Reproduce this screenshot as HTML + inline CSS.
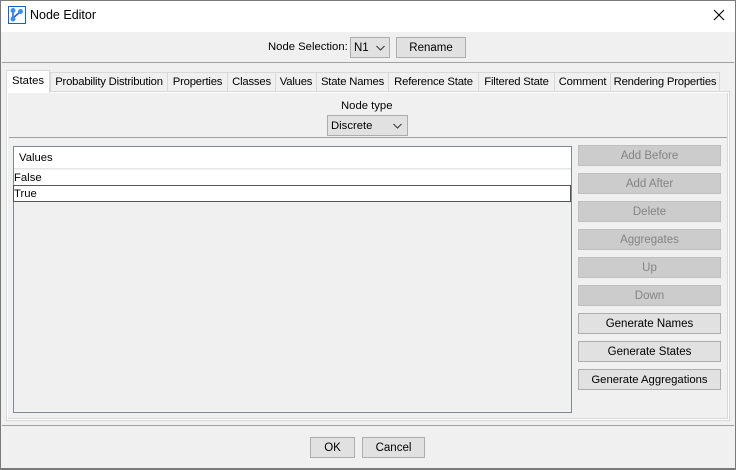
<!DOCTYPE html>
<html><head><style>
*{box-sizing:border-box;margin:0;padding:0}
body{width:736px;height:470px;background:#f0f0f0;font-family:"Liberation Sans",Tahoma,sans-serif;font-size:11.5px;color:#000;position:relative;overflow:hidden}
.a{position:absolute;white-space:nowrap}
.btn{position:absolute;background:#e1e1e1;border:1px solid #adadad;text-align:center;line-height:20px;height:21px;white-space:nowrap}
.dis{background:#cccccc;border-color:#bfbfbf;color:#838383}
.tab{position:absolute;top:72px;height:20px;border:1px solid #d9d9d9;border-bottom:none;background:#f0f0f0;text-align:center;line-height:19px;white-space:nowrap;font-size:11.3px;letter-spacing:-0.2px;overflow:hidden}
.chev{position:absolute;top:7px}
</style></head><body>
<div class="a" style="left:0;top:0;width:736px;height:32px;background:#fff"></div>
<div class="a" style="left:0;top:0;width:736px;height:470px;border:1px solid #7a7a7a;border-bottom:2px solid #7a7a7a"></div>
<svg class="a" style="left:8px;top:6px" width="18" height="18" viewBox="0 0 18 18"><rect x="0.5" y="0.5" width="17" height="17" fill="#fff" stroke="#1a5fd0"/><line x1="5" y1="4" x2="5" y2="13" stroke="#1a5fd0" stroke-width="1.5"/><line x1="5" y1="12" x2="12" y2="6" stroke="#1a5fd0" stroke-width="1.5"/><circle cx="5" cy="4.5" r="2.5" fill="#3a8ef0"/><circle cx="12.5" cy="5.5" r="2.5" fill="#3a8ef0"/><circle cx="5" cy="13" r="2.5" fill="#3a8ef0"/></svg>
<div class="a" style="left:30px;top:8px;font-size:12.5px">Node Editor</div>
<svg class="a" style="left:713px;top:9px" width="12" height="12" viewBox="0 0 12 12"><path d="M1 1L11 11M11 1L1 11" stroke="#000" stroke-width="1.1"/></svg>
<div class="a" style="left:268px;top:41px;font-size:11.3px">Node Selection:</div>
<div class="btn" style="left:350px;top:37px;width:40px;height:21px;text-align:left;padding-left:3px">N1<svg class="chev" style="left:25px" width="9" height="6" viewBox="0 0 9 6"><path d="M0.5 1L4.5 5L8.5 1" stroke="#333" fill="none"/></svg></div>
<div class="btn" style="left:396px;top:37px;width:70px">Rename</div>
<div class="a" style="left:2px;top:62px;width:732px;height:1px;background:#a0a0a0"></div>
<div class="tab" style="left:50px;width:118px">Probability Distribution</div>
<div class="tab" style="left:167px;width:61px">Properties</div>
<div class="tab" style="left:227px;width:49px">Classes</div>
<div class="tab" style="left:275px;width:42px">Values</div>
<div class="tab" style="left:316px;width:73px">State Names</div>
<div class="tab" style="left:388px;width:91px">Reference State</div>
<div class="tab" style="left:478px;width:77px">Filtered State</div>
<div class="tab" style="left:554px;width:57px">Comment</div>
<div class="tab" style="left:610px;width:110px">Rendering Properties</div>
<div class="a" style="left:6px;top:91px;width:724px;height:330px;border:1px solid #d9d9d9;background:#fff"></div>
<div class="a" style="left:8px;top:93px;width:720px;height:326px;border:1px solid #d9d9d9;border-left:none;border-top:none;background:#f0f0f0"></div>
<div class="a" style="left:6px;top:70px;width:44px;height:23px;background:#fff;border:1px solid #d9d9d9;border-bottom:none;text-align:center;line-height:21px;font-size:11.3px">States</div>
<div class="a" style="left:341px;top:100px;font-size:11.3px">Node type</div>
<div class="btn" style="left:327px;top:115px;width:81px;height:21px;text-align:left;padding-left:3px;font-size:11.3px">Discrete<svg class="chev" style="left:65px" width="9" height="6" viewBox="0 0 9 6"><path d="M0.5 1L4.5 5L8.5 1" stroke="#333" fill="none"/></svg></div>
<div class="a" style="left:9px;top:137px;width:718px;height:1px;background:#a0a0a0"></div>
<div class="a" style="left:13px;top:146px;width:559px;height:267px;border:1px solid #828790;background:#f0f0f0"></div>
<div class="a" style="left:14px;top:147px;width:557px;height:22px;background:#fff;border-bottom:1px solid #e5e5e5;padding:5px 5px;font-size:11.3px">Values</div>
<div class="a" style="left:14px;top:170px;width:557px;height:16px;background:#fff;line-height:16px;font-size:11.3px">False</div>
<div class="a" style="left:13px;top:185px;width:558px;height:17px;background:#fff;border:1px solid #555;line-height:16px;font-size:11.3px">True</div>
<div class="btn dis" style="left:578px;top:145px;width:143px">Add Before</div>
<div class="btn dis" style="left:578px;top:173px;width:143px">Add After</div>
<div class="btn dis" style="left:578px;top:201px;width:143px">Delete</div>
<div class="btn dis" style="left:578px;top:229px;width:143px">Aggregates</div>
<div class="btn dis" style="left:578px;top:257px;width:143px">Up</div>
<div class="btn dis" style="left:578px;top:285px;width:143px">Down</div>
<div class="btn" style="left:578px;top:313px;width:143px">Generate Names</div>
<div class="btn" style="left:578px;top:341px;width:143px">Generate States</div>
<div class="btn" style="left:578px;top:369px;width:143px;font-size:11.3px">Generate Aggregations</div>
<div class="a" style="left:2px;top:425px;width:732px;height:1px;background:#a0a0a0"></div>
<div class="btn" style="left:310px;top:437px;width:45px">OK</div>
<div class="btn" style="left:362px;top:437px;width:63px">Cancel</div>
</body></html>
